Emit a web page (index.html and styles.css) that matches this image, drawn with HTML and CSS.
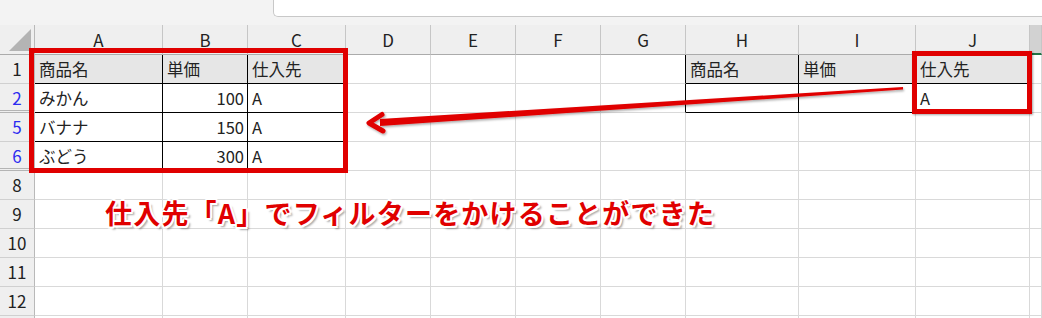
FILE: index.html
```html
<!DOCTYPE html>
<html lang="ja">
<head>
    <meta charset="UTF-8">
    <title>フィルター結果</title>
    <link rel="stylesheet" href="styles.css">
</head>
<body>
    <div class="topbar"><div class="namebox"></div></div>

    <div class="sheet">
        <!-- column headers -->
        <div class="corner"><span class="tri"></span></div>
        <div class="ch">A</div><div class="ch">B</div><div class="ch">C</div><div class="ch">D</div>
        <div class="ch">E</div><div class="ch">F</div><div class="ch">G</div><div class="ch">H</div>
        <div class="ch">I</div><div class="ch">J</div><div class="ch sel"></div>

        <!-- row 1 -->
        <div class="rh">1</div>
        <div class="c th bl">商品名</div><div class="c th bl">単価</div><div class="c th bl">仕入先</div>
        <div class="c"></div><div class="c"></div><div class="c"></div><div class="c br"></div>
        <div class="c th bl">商品名</div><div class="c th bl">単価</div><div class="c th bl">仕入先</div><div class="c"></div>

        <!-- row 2 -->
        <div class="rh blue dbl">2</div>
        <div class="c bl">みかん</div><div class="c bl num">100</div><div class="c bl">A</div>
        <div class="c"></div><div class="c"></div><div class="c"></div><div class="c br"></div>
        <div class="c bl"></div><div class="c bl"></div><div class="c bl">A</div><div class="c"></div>

        <!-- row 5 -->
        <div class="rh blue">5</div>
        <div class="c bl">バナナ</div><div class="c bl num">150</div><div class="c bl">A</div>
        <div class="c"></div><div class="c"></div><div class="c"></div><div class="c"></div>
        <div class="c"></div><div class="c"></div><div class="c"></div><div class="c"></div>

        <!-- row 6 -->
        <div class="rh blue dbl">6</div>
        <div class="c bl">ぶどう</div><div class="c bl num">300</div><div class="c bl">A</div>
        <div class="c"></div><div class="c"></div><div class="c"></div><div class="c"></div>
        <div class="c"></div><div class="c"></div><div class="c"></div><div class="c"></div>

        <div class="rh">8</div>
        <div class="c"></div><div class="c"></div><div class="c"></div><div class="c"></div><div class="c"></div><div class="c"></div>
        <div class="c"></div><div class="c"></div><div class="c"></div><div class="c"></div><div class="c"></div>

        <div class="rh">9</div>
        <div class="c"></div><div class="c"></div><div class="c"></div><div class="c"></div><div class="c"></div><div class="c"></div>
        <div class="c"></div><div class="c"></div><div class="c"></div><div class="c"></div><div class="c"></div>

        <div class="rh">10</div>
        <div class="c"></div><div class="c"></div><div class="c"></div><div class="c"></div><div class="c"></div><div class="c"></div>
        <div class="c"></div><div class="c"></div><div class="c"></div><div class="c"></div><div class="c"></div>

        <div class="rh">11</div>
        <div class="c"></div><div class="c"></div><div class="c"></div><div class="c"></div><div class="c"></div><div class="c"></div>
        <div class="c"></div><div class="c"></div><div class="c"></div><div class="c"></div><div class="c"></div>

        <div class="rh">12</div>
        <div class="c"></div><div class="c"></div><div class="c"></div><div class="c"></div><div class="c"></div><div class="c"></div>
        <div class="c"></div><div class="c"></div><div class="c"></div><div class="c"></div><div class="c"></div>

        <!-- row 13, only its top edge is in view -->
        <div class="rh"></div>
        <div class="c"></div><div class="c"></div><div class="c"></div><div class="c"></div><div class="c"></div><div class="c"></div>
        <div class="c"></div><div class="c"></div><div class="c"></div><div class="c"></div><div class="c"></div>
    </div>

    <!-- annotations on top of the sheet -->
    <div class="mark mark-left"></div>
    <div class="mark mark-right"></div>

    <svg class="arrow" width="1042" height="318" viewBox="0 0 1042 318">
        <defs>
            <filter id="shade" x="-5%" y="-50%" width="110%" height="200%">
                <feDropShadow dx="1" dy="1.5" stdDeviation="0.8" flood-color="#000" flood-opacity="0.35"/>
            </filter>
        </defs>
        <g filter="url(#shade)" fill="#e00000" stroke="#e00000">
            <polygon points="903,87 903,89.5 380,126 380,119" stroke="none"/>
            <polyline points="382,114.5 369,123 383,131" fill="none" stroke-width="5" stroke-linejoin="round" stroke-linecap="round"/>
        </g>
    </svg>

    <div class="note">仕入先「A」でフィルターをかけることができた</div>
</body>
</html>
```

FILE: styles.css
```css
* {
    box-sizing: border-box;
}

body {
    margin: 0;
    width: 1042px;
    height: 318px;
    overflow: hidden;
    position: relative;
    background: #ffffff;
    font-family: "Noto Sans CJK JP", "Noto Sans", sans-serif;
    color: #222222;
}

.topbar {
    height: 25px;
    background-color: #f3f3f3;
}

.namebox {
    margin-left: 273px;
    height: 17px;
    background: #ffffff;
    border-left: 1px solid #c8c8c8;
    border-bottom: 1px solid #c8c8c8;
    border-bottom-left-radius: 5px;
}

.sheet {
    display: grid;
    grid-template-columns: 35px 128px 85px 98px 85px 85px 85px 85px 113px 117px 114px 1fr;
    grid-template-rows: 30px repeat(9, 29px) 3px;
}

.corner {
    position: relative;
    background-color: #efefef;
    border-right: 1px solid #b9b9b9;
    border-bottom: 1px solid #ababab;
}

.tri {
    position: absolute;
    left: 9px;
    top: 4px;
    width: 22px;
    height: 22px;
    background: #b4b4b4;
    clip-path: polygon(100% 0, 100% 100%, 0 100%);
}

.ch {
    background-color: #efefef;
    border-right: 1px solid #c6c6c6;
    border-bottom: 1px solid #ababab;
    text-align: center;
    font-size: 17px;
    line-height: 30px;
    color: #222222;
}

.ch.sel {
    background-color: #d2d2d2;
    border-bottom: 2px solid #217346;
}

.rh {
    background-color: #efefef;
    border-right: 1px solid #b9b9b9;
    border-bottom: 1px solid #d0d0d0;
    text-align: center;
    font-size: 17px;
    line-height: 28px;
    color: #222222;
}

.rh.blue {
    color: #2d2df0;
}

.rh.dbl {
    border-bottom: 3px double #b4b4b4;
}

.c {
    border-right: 1px solid #d9d9d9;
    border-bottom: 1px solid #d9d9d9;
    padding: 0 4px;
    font-size: 16.5px;
    line-height: 28px;
    white-space: nowrap;
    overflow: hidden;
}

.c.num {
    text-align: right;
    padding-right: 3px;
}

.c.th {
    background-color: #e6e6e6;
}

.c.bl {
    border-right-color: #000000;
    border-bottom-color: #000000;
}

.c.br {
    border-right-color: #000000;
}

.mark {
    position: absolute;
    border: 5px solid #e00000;
}

.mark-left {
    left: 29px;
    top: 48px;
    width: 319px;
    height: 125px;
}

.mark-right {
    left: 912px;
    top: 51px;
    width: 120px;
    height: 63px;
    box-shadow: 1px 1px 2px rgba(0, 0, 0, 0.35);
}

.arrow {
    position: absolute;
    left: 0;
    top: 0;
    pointer-events: none;
}

.note {
    position: absolute;
    left: 105px;
    top: 195px;
    font-size: 27px;
    font-weight: bold;
    letter-spacing: 1.2px;
    line-height: 1.3;
    color: #e00000;
    white-space: nowrap;
    text-shadow:
        2px 0 #fff, -2px 0 #fff, 0 2px #fff, 0 -2px #fff,
        1.5px 1.5px #fff, -1.5px 1.5px #fff, 1.5px -1.5px #fff, -1.5px -1.5px #fff,
        3px 3px 2px rgba(0, 0, 0, 0.35);
}
```
